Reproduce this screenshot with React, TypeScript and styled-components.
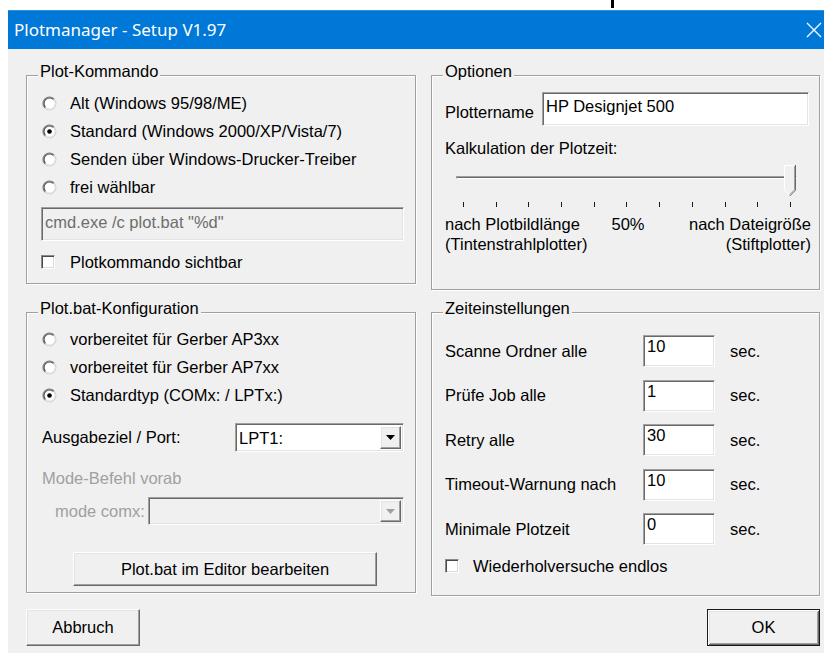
import React from "react";
import styled, { createGlobalStyle, css } from "styled-components";

const GlobalStyle = createGlobalStyle`
  html, body { margin: 0; padding: 0; background: #ffffff; }
  body {
    font-family: "Liberation Sans", Arial, sans-serif;
    font-size: 16.5px;
    color: #000000;
  }
  * { box-sizing: border-box; }
`;

const FACE = "#f0f0f0";

const sunken = css`
  border: 1px solid;
  border-color: #a0a0a0 #ffffff #ffffff #a0a0a0;
  box-shadow: inset 1px 1px 0 #696969, inset -1px -1px 0 #e3e3e3;
`;

const raised = css`
  border: 1px solid;
  border-color: #ffffff #696969 #696969 #ffffff;
  box-shadow: inset -1px -1px 0 #a0a0a0, inset 1px 1px 0 #e3e3e3;
`;

/* ---------- page & window frame ---------- */

const Page = styled.div`
  width: 824px;
  height: 653px;
  overflow: hidden;
  background: #ffffff;
  display: flex;
  flex-direction: column;
`;

const TopStrip = styled.div`
  height: 10px;
  flex: none;
  display: flex;
  padding-left: 611px;
`;

const PointerMark = styled.div`
  width: 3px;
  height: 8px;
  background: #000000;
`;

const Window = styled.div`
  flex: 1;
  margin-left: 8px;
  display: flex;
  flex-direction: column;
  background: ${FACE};
  min-height: 0;
`;

const TitleBar = styled.div`
  height: 39px;
  flex: none;
  background: #0078d7;
  border-top: 1px solid #2b8fe0;
  display: flex;
  align-items: center;
  justify-content: space-between;
  padding: 0 2px 0 6px;
`;

const TitleText = styled.span`
  font-family: "Noto Sans", "Open Sans", sans-serif;
  font-size: 17px;
  color: #ffffff;
  margin-top: -2px;
`;

const CloseGlyph = styled.svg`
  display: block;
  margin-top: -1px;
`;

const Client = styled.div`
  flex: 1;
  padding: 26px 0 0 18px;
  display: flex;
  flex-direction: column;
`;

const Columns = styled.div`
  display: grid;
  grid-template-columns: 390px 389px;
  column-gap: 15px;
  align-items: start;
`;

const Column = styled.div`
  display: flex;
  flex-direction: column;
`;

/* ---------- group boxes ---------- */

const GroupBox = styled.div<{ $h: number; $mt?: number; $pad: string }>`
  position: relative;
  height: ${(p) => p.$h}px;
  margin-top: ${(p) => p.$mt ?? 0}px;
  padding: ${(p) => p.$pad};
  border: 1px solid #a0a0a0;
  box-shadow: inset 1px 1px 0 #ffffff, 1px 1px 0 #ffffff;
  display: flex;
  flex-direction: column;
`;

const Legend = styled.span`
  position: absolute;
  top: -14px;
  left: 11px;
  padding: 0 2px;
  line-height: 18px;
  background: ${FACE};
`;

/* ---------- controls ---------- */

const ChoiceRow = styled.div<{ $mt?: number; $ml?: number; $h?: number }>`
  display: flex;
  align-items: center;
  height: ${(p) => p.$h ?? 28}px;
  margin-top: ${(p) => p.$mt ?? 0}px;
  margin-left: ${(p) => p.$ml ?? 0}px;
  white-space: nowrap;
`;

const RadioSvg = styled.svg`
  flex: none;
  display: block;
  margin-right: 13px;
`;

const CheckBox = styled.div<{ $gap: number }>`
  flex: none;
  width: 14px;
  height: 14px;
  margin-right: ${(p) => p.$gap}px;
  background: #ffffff;
  border: 1px solid;
  border-color: #8a8a8a #ffffff #ffffff #8a8a8a;
  box-shadow: inset 1px 1px 0 #4a4a4a, inset -1px -1px 0 #dcdcdc;
`;

const Edit = styled.div<{ $w: number; $h: number; $pt: number; $disabled?: boolean }>`
  width: ${(p) => p.$w}px;
  height: ${(p) => p.$h}px;
  flex: none;
  padding: ${(p) => p.$pt}px 3px 0 3px;
  line-height: 16px;
  white-space: nowrap;
  overflow: hidden;
  background: ${(p) => (p.$disabled ? FACE : "#ffffff")};
  color: ${(p) => (p.$disabled ? "#6d6d6d" : "#000000")};
  ${sunken}
`;

const TextLine = styled.div<{ $mt?: number; $muted?: boolean }>`
  line-height: 28px;
  margin-top: ${(p) => p.$mt ?? 0}px;
  color: ${(p) => (p.$muted ? "#a0a0a0" : "#000000")};
  white-space: nowrap;
`;

const PlotterRow = styled.div`
  display: flex;
  align-items: flex-start;
  justify-content: space-between;
  height: 34px;
`;

const PlotterLabel = styled.span`
  line-height: 28px;
  margin-top: 6px;
`;

const FieldGrid = styled.div<{ $cols: string; $h: number; $mt: number }>`
  display: grid;
  grid-template-columns: ${(p) => p.$cols};
  align-items: center;
  height: ${(p) => p.$h}px;
  margin-top: ${(p) => p.$mt}px;
  white-space: nowrap;
`;

const FieldLabel = styled.span<{ $indent?: number; $muted?: boolean }>`
  padding-left: ${(p) => p.$indent ?? 0}px;
  color: ${(p) => (p.$muted ? "#a0a0a0" : "#000000")};
`;

const Combo = styled.div<{ $disabled?: boolean }>`
  height: 100%;
  display: flex;
  align-items: stretch;
  justify-content: space-between;
  padding: 2px 2px 2px 3px;
  background: ${(p) => (p.$disabled ? FACE : "#ffffff")};
  ${sunken}
`;

const ComboValue = styled.span`
  align-self: center;
  line-height: 18px;
`;

const ComboButton = styled.div`
  width: 21px;
  flex: none;
  background: ${FACE};
  display: flex;
  align-items: center;
  justify-content: center;
  ${raised}
`;

const PushButton = styled.div<{ $w: number; $h: number; $default?: boolean }>`
  width: ${(p) => p.$w}px;
  height: ${(p) => p.$h}px;
  flex: none;
  display: flex;
  align-items: center;
  justify-content: center;
  background: ${FACE};
  white-space: nowrap;
  ${raised}
  ${(p) =>
    p.$default &&
    css`
      border-color: #1a1a1a;
      box-shadow: inset 1px 1px 0 #ffffff, inset -1px -1px 0 #696969,
        inset 2px 2px 0 #e3e3e3, inset -2px -2px 0 #a0a0a0;
    `}
`;

const EditorButtonRow = styled.div`
  margin-top: 27px;
  padding-left: 31px;
`;

/* ---------- trackbar ---------- */

const Trackbar = styled.div`
  position: relative;
  width: 341px;
  height: 45px;
  margin-left: 11px;
  display: flex;
  flex-direction: column;
`;

const Groove = styled.div`
  margin-top: 14px;
  height: 4px;
  ${sunken}
`;

const Thumb = styled.svg`
  position: absolute;
  left: 328px;
  top: 3px;
  display: block;
`;

const Ticks = styled.div`
  display: flex;
  justify-content: space-between;
  margin-top: 23px;
  padding: 0 6px 0 7px;
`;

const Tick = styled.div`
  width: 1px;
  height: 5px;
  background: #1a1a1a;
`;

const ScaleLabels = styled.div`
  display: grid;
  grid-template-columns: 1fr auto 1fr;
  margin-top: 7px;
  margin-right: -2px;
  line-height: 20px;
  white-space: nowrap;
`;

const ScaleText = styled.div<{ $align: "left" | "center" | "right" }>`
  text-align: ${(p) => p.$align};
`;

/* ---------- timing grid ---------- */

const TimeGrid = styled.div`
  display: grid;
  grid-template-columns: 198px 72px auto;
  grid-auto-rows: 32px;
  row-gap: 12.5px;
  align-items: center;
  white-space: nowrap;
`;

const Unit = styled.span`
  padding-left: 15px;
`;

/* ---------- footer ---------- */

const ButtonRow = styled.div`
  width: 794px;
  margin-top: 13px;
  display: flex;
  justify-content: space-between;
`;

/* ---------- small drawings ---------- */

const Radio: React.FC<{ checked?: boolean }> = ({ checked }) => (
  <RadioSvg width="15" height="15" viewBox="0 0 15 15">
    <circle cx="7.5" cy="7.5" r="6.5" fill="#ffffff" stroke="#d0d0d0" strokeWidth="1" />
    <path d="M2.9 12.1A6.5 6.5 0 0 1 12.1 2.9" stroke="#8a8a8a" strokeWidth="1.2" fill="none" />
    <path d="M3.61 11.39A5.5 5.5 0 0 1 11.39 3.61" stroke="#4a4a4a" strokeWidth="1.1" fill="none" />
    <path d="M11.39 3.61A5.5 5.5 0 0 1 3.61 11.39" stroke="#e0e0e0" fill="none" />
    {checked && <circle cx="7.5" cy="7.5" r="2.3" fill="#000000" />}
  </RadioSvg>
);

const DropArrow: React.FC<{ color: string }> = ({ color }) => (
  <svg width="9" height="5" viewBox="0 0 9 5">
    <path d="M0 0H9L4.5 5Z" fill={color} />
  </svg>
);

const ComboBox: React.FC<{ value?: string; disabled?: boolean }> = ({ value, disabled }) => (
  <Combo $disabled={disabled}>
    <ComboValue>{value}</ComboValue>
    <ComboButton>
      <DropArrow color={disabled ? "#a0a0a0" : "#000000"} />
    </ComboButton>
  </Combo>
);

const timings = [
  { label: "Scanne Ordner alle", value: "10" },
  { label: "Prüfe Job alle", value: "1" },
  { label: "Retry alle", value: "30" },
  { label: "Timeout-Warnung nach", value: "10" },
  { label: "Minimale Plotzeit", value: "0" },
];

export default function App() {
  return (
    <>
      <GlobalStyle />
      <Page>
        <TopStrip>
          <PointerMark />
        </TopStrip>
        <Window>
          <TitleBar>
            <TitleText>Plotmanager - Setup V1.97</TitleText>
            <CloseGlyph width="16" height="16" viewBox="0 0 16 16">
              <path d="M1 1L15 15M15 1L1 15" stroke="#ffffff" strokeWidth="1.3" />
            </CloseGlyph>
          </TitleBar>

          <Client>
            <Columns>
              <Column>
                <GroupBox $h={209} $pad="13px 11px 0 15px">
                  <Legend>Plot-Kommando</Legend>
                  <ChoiceRow>
                    <Radio />
                    Alt (Windows 95/98/ME)
                  </ChoiceRow>
                  <ChoiceRow>
                    <Radio checked />
                    Standard (Windows 2000/XP/Vista/7)
                  </ChoiceRow>
                  <ChoiceRow>
                    <Radio />
                    Senden über Windows-Drucker-Treiber
                  </ChoiceRow>
                  <ChoiceRow>
                    <Radio />
                    frei wählbar
                  </ChoiceRow>
                  <ChoiceRow $mt={6} $ml={-1} $h={34}>
                    <Edit $w={363} $h={34} $pt={6} $disabled>
                      cmd.exe /c plot.bat "%d"
                    </Edit>
                  </ChoiceRow>
                  <ChoiceRow $mt={7} $ml={-1}>
                    <CheckBox $gap={15} />
                    Plotkommando sichtbar
                  </ChoiceRow>
                </GroupBox>

                <GroupBox $h={281} $mt={28} $pad="12px 11px 0 15px">
                  <Legend>Plot.bat-Konfiguration</Legend>
                  <ChoiceRow>
                    <Radio />
                    vorbereitet für Gerber AP3xx
                  </ChoiceRow>
                  <ChoiceRow>
                    <Radio />
                    vorbereitet für Gerber AP7xx
                  </ChoiceRow>
                  <ChoiceRow>
                    <Radio checked />
                    Standardtyp (COMx: / LPTx:)
                  </ChoiceRow>
                  <FieldGrid $cols="193px 169px" $h={29} $mt={14}>
                    <FieldLabel>Ausgabeziel / Port:</FieldLabel>
                    <ComboBox value="LPT1:" />
                  </FieldGrid>
                  <TextLine $mt={12} $muted>
                    Mode-Befehl vorab
                  </TextLine>
                  <FieldGrid $cols="106px 256px" $h={28} $mt={5}>
                    <FieldLabel $indent={13} $muted>
                      mode comx:
                    </FieldLabel>
                    <ComboBox disabled />
                  </FieldGrid>
                  <EditorButtonRow>
                    <PushButton $w={304} $h={34}>
                      Plot.bat im Editor bearbeiten
                    </PushButton>
                  </EditorButtonRow>
                </GroupBox>
              </Column>

              <Column>
                <GroupBox $h={215} $pad="16px 10px 0 13px">
                  <Legend>Optionen</Legend>
                  <PlotterRow>
                    <PlotterLabel>Plottername</PlotterLabel>
                    <Edit $w={267} $h={34} $pt={5}>
                      HP Designjet 500
                    </Edit>
                  </PlotterRow>
                  <TextLine $mt={8}>Kalkulation der Plotzeit:</TextLine>
                  <Trackbar>
                    <Groove />
                    <Thumb width="12" height="32" viewBox="0 0 12 32">
                      <path d="M0.5 0.5H10.5V25L5.5 30L0.5 25Z" fill="#f0f0f0" />
                      <path d="M0.5 25V0.5H10.5" stroke="#ffffff" fill="none" />
                      <path d="M0.5 25L5 29.5" stroke="#ffffff" fill="none" />
                      <path d="M11.5 0V25.2L5.8 31" stroke="#696969" fill="none" />
                      <path d="M10.5 1V24.8L5.5 29.8" stroke="#a0a0a0" fill="none" />
                    </Thumb>
                    <Ticks>
                      {Array.from({ length: 11 }, (_, i) => (
                        <Tick key={i} />
                      ))}
                    </Ticks>
                  </Trackbar>
                  <ScaleLabels>
                    <ScaleText $align="left">
                      nach Plotbildlänge
                      <br />
                      (Tintenstrahlplotter)
                    </ScaleText>
                    <ScaleText $align="center">50%</ScaleText>
                    <ScaleText $align="right">
                      nach Dateigröße
                      <br />
                      (Stiftplotter)
                    </ScaleText>
                  </ScaleLabels>
                </GroupBox>

                <GroupBox $h={284} $mt={22} $pad="22px 0 0 13px">
                  <Legend>Zeiteinstellungen</Legend>
                  <TimeGrid>
                    {timings.map((t) => (
                      <React.Fragment key={t.label}>
                        <span>{t.label}</span>
                        <Edit $w={72} $h={32} $pt={2}>
                          {t.value}
                        </Edit>
                        <Unit>sec.</Unit>
                      </React.Fragment>
                    ))}
                  </TimeGrid>
                  <ChoiceRow $mt={7}>
                    <CheckBox $gap={14} />
                    Wiederholversuche endlos
                  </ChoiceRow>
                </GroupBox>
              </Column>
            </Columns>

            <ButtonRow>
              <PushButton $w={114} $h={37}>
                Abbruch
              </PushButton>
              <PushButton $w={113} $h={37} $default>
                OK
              </PushButton>
            </ButtonRow>
          </Client>
        </Window>
      </Page>
    </>
  );
}
